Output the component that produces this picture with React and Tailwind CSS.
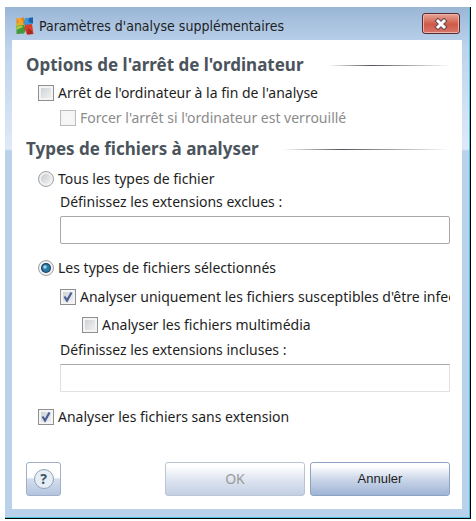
import React, { useState } from 'react';

const AppLogo = () => (
	<svg width="18" height="18" viewBox="0 0 18 18" aria-hidden="true">
		<path d="M0.5 1.5 L8 0.5 L9.5 8.5 L0.5 9 Z" fill="#e8801c" />
		<path d="M0.5 1 L5 1 L8 8.5 L3 6 Z" fill="#f5a52b" />
		<path d="M0.5 6 L4 6 L8.5 9 L0.5 9.5 Z" fill="#d8b52c" />
		<path d="M9 1 L17 0.5 L17 6.5 L10 9 L7.5 7 Z" fill="#3a97d6" />
		<path d="M13 1 L17 0.5 L17 6.5 L12.5 5 Z" fill="#1d5fa8" />
		<path d="M0.5 9 L8 8 L10 12 L8 16.5 L0.5 17 Z" fill="#43983a" />
		<path d="M0.5 9.5 L6 8.5 L7 10 L0.5 13 Z" fill="#a9c93a" />
		<path d="M9 8 L16 7 L17.5 17 L11 17.5 L8.5 12 Z" fill="#d6402b" />
		<path d="M12 11 L16 14 L17 17 L11 17.5 Z" fill="#ab2a20" />
	</svg>
);

const CloseIcon = () => (
	<svg width="14" height="12" viewBox="0 0 14 12" aria-hidden="true">
		<path d="M4 3 L10 9 M10 3 L4 9" stroke="#6b4a50" strokeWidth="5" strokeLinecap="square" />
		<path d="M4 3 L10 9 M10 3 L4 9" stroke="#ffffff" strokeWidth="3" strokeLinecap="square" />
	</svg>
);

const SectionTitle = ({ children }) => (
	<div className="flex h-6 items-center gap-6">
		<h2 className="whitespace-nowrap text-[17px] font-bold text-[#4b545c]">{children}</h2>
		<div className="h-px flex-1 bg-linear-to-r from-transparent via-[#55555d] via-35% to-transparent" />
	</div>
);

const Checkbox = ({ label, checked, onChange, disabled }) => (
	<label className={`flex h-6 items-center gap-1 whitespace-nowrap ${disabled ? 'text-[#8b8b8b]' : ''}`}>
		<span className="relative flex shrink-0">
			<input
				type="checkbox"
				checked={checked}
				disabled={disabled}
				onChange={(e) => onChange(e.target.checked)}
				className="peer size-4 appearance-none border border-[#8e8f8f] bg-linear-to-br from-[#c9cdd2] to-[#f6f6f6] ring-2 ring-inset ring-[#f4f4f4] disabled:border-[#bcbcbc] disabled:from-[#f6f6f6]"
			/>
			<svg className="pointer-events-none absolute inset-0 hidden peer-checked:block" width="16" height="16" viewBox="0 0 16 16" fill="none" aria-hidden="true">
				<path d="M4.5 7.5 L7 11.5 L11.5 3.5" stroke="#4a5f97" strokeWidth="2.2" />
			</svg>
		</span>
		<span>{label}</span>
	</label>
);

const Radio = ({ label, value, selected, onSelect }) => (
	<label className="flex h-6 items-center gap-1 whitespace-nowrap">
		<span className="relative flex shrink-0">
			<input
				type="radio"
				name="fileTypes"
				value={value}
				checked={selected}
				onChange={() => onSelect(value)}
				className="peer size-4 appearance-none rounded-full border border-[#a0a2a4] bg-linear-to-br from-[#bfc3c7] to-[#fafafa] ring-2 ring-inset ring-[#f1f1f1]"
			/>
			<svg className="pointer-events-none absolute inset-0 hidden peer-checked:block" width="16" height="16" viewBox="0 0 16 16" aria-hidden="true">
				<circle cx="8" cy="8" r="5" fill="#1a4263" />
				<circle cx="8" cy="8" r="3.8" fill="#2b7ba8" />
				<circle cx="7" cy="7" r="1.8" fill="#9bd6ee" />
			</svg>
		</span>
		<span>{label}</span>
	</label>
);

const App = () => {
	const [shutdown, setShutdown] = useState(false);
	const [force, setForce] = useState(false);
	const [fileTypes, setFileTypes] = useState('selected');
	const [onlyInfectable, setOnlyInfectable] = useState(true);
	const [media, setMedia] = useState(false);
	const [noExtension, setNoExtension] = useState(true);
	const [excluded, setExcluded] = useState('');
	const [included, setIncluded] = useState('');

	return (
		<main className="bg-white px-[5px] pt-[7px] pb-px font-['Noto_Sans',sans-serif] text-[14px] leading-5 text-[#1e1e1e]">
			<div className="border-r border-b border-black">
				<div className="border-r border-b border-[#4fc4dc] bg-[linear-gradient(to_bottom,#9ab6d6,#bdd3ec_40px,#dfe9f8_142px,#b9d1ea_144px)] px-[7px] pb-2">
					<header className="flex h-[33px] items-center justify-between pr-[2px] pl-1">
						<div className="flex items-center gap-[5px] pt-1">
							<AppLogo />
							<h1 className="whitespace-nowrap font-['DejaVu_Sans_Condensed','DejaVu_Sans',sans-serif]">Paramètres d'analyse supplémentaires</h1>
						</div>
						<button
							type="button"
							aria-label="Fermer"
							className="flex h-[21px] w-[38px] items-center justify-center rounded-[3px] border border-[#5a2a30] bg-linear-to-b from-[#e5a396] via-[#cf5a48] via-55% to-[#d8776a] ring-1 ring-inset ring-[#eab4aa]"
						>
							<CloseIcon />
						</button>
					</header>

					<form className="bg-white pt-[13px] pr-3 pb-[13px] pl-[14px]" onSubmit={(e) => e.preventDefault()}>
						<SectionTitle>Options de l'arrêt de l'ordinateur</SectionTitle>
						<div className="mt-1 pl-3">
							<Checkbox label="Arrêt de l'ordinateur à la fin de l'analyse" checked={shutdown} onChange={setShutdown} />
							<div className="mt-px pl-[22px]">
								<Checkbox label="Forcer l'arrêt si l'ordinateur est verrouillé" checked={force} onChange={setForce} disabled={!shutdown} />
							</div>
						</div>

						<div className="mt-[7px]">
							<SectionTitle>Types de fichiers à analyser</SectionTitle>
						</div>
						<div className="mt-[6px] pl-3">
							<Radio label="Tous les types de fichier" value="all" selected={fileTypes === 'all'} onSelect={setFileTypes} />
							<div className="mt-px pl-[22px]">
								<label htmlFor="excluded" className="block">Définissez les extensions exclues :</label>
								<input
									id="excluded"
									type="text"
									value={excluded}
									onChange={(e) => setExcluded(e.target.value)}
									className="mt-1 block h-7 w-full rounded-[2px] border border-[#aaa6aa] bg-white px-2 outline-none"
								/>
							</div>

							<div className="mt-3">
								<Radio label="Les types de fichiers sélectionnés" value="selected" selected={fileTypes === 'selected'} onSelect={setFileTypes} />
							</div>
							<div className="mt-[5px] pl-[22px]">
								<div className="overflow-hidden">
									<Checkbox label="Analyser uniquement les fichiers susceptibles d'être infectés" checked={onlyInfectable} onChange={setOnlyInfectable} />
								</div>
								<div className="mt-1 pl-[22px]">
									<Checkbox label="Analyser les fichiers multimédia" checked={media} onChange={setMedia} />
								</div>
								<label htmlFor="included" className="mt-[3px] block">Définissez les extensions incluses :</label>
								<input
									id="included"
									type="text"
									value={included}
									onChange={(e) => setIncluded(e.target.value)}
									className="mt-1 block h-7 w-full border border-[#e3dfe3] border-t-[#aba9ad] bg-white px-2 outline-none"
								/>
							</div>

							<div className="mt-[13px]">
								<Checkbox label="Analyser les fichiers sans extension" checked={noExtension} onChange={setNoExtension} />
							</div>
						</div>

						<footer className="mt-[33px] flex items-center justify-between">
							<button
								type="button"
								aria-label="Aide"
								className="flex h-[34px] w-[35px] items-center justify-center rounded-[3px] border border-[#9fb0c8] bg-linear-to-b from-white from-45% via-[#d5deed] via-50% to-[#b4c4df]"
							>
								<span className="flex size-5 items-center justify-center rounded-full border border-[#8fa3b8] bg-[#e6edf5] font-bold text-[#41566b]">?</span>
							</button>
							<div className="flex gap-[5px]">
								<button
									type="submit"
									disabled
									className="h-[34px] w-[140px] rounded-[3px] border border-[#b9c4d4] bg-linear-to-b from-white from-10% via-[#e0e6f1] via-50% to-[#c3cfe3] text-[#9a9a9a]"
								>
									OK
								</button>
								<button
									type="button"
									className="h-[34px] w-[140px] rounded-[3px] border border-[#8ea3c2] bg-linear-to-b from-white from-10% via-[#ccd7e9] via-50% to-[#9fb4d6] font-['Liberation_Sans',sans-serif] text-[13px]"
								>
									Annuler
								</button>
							</div>
						</footer>
					</form>
				</div>
			</div>
		</main>
	);
};

export default App;
